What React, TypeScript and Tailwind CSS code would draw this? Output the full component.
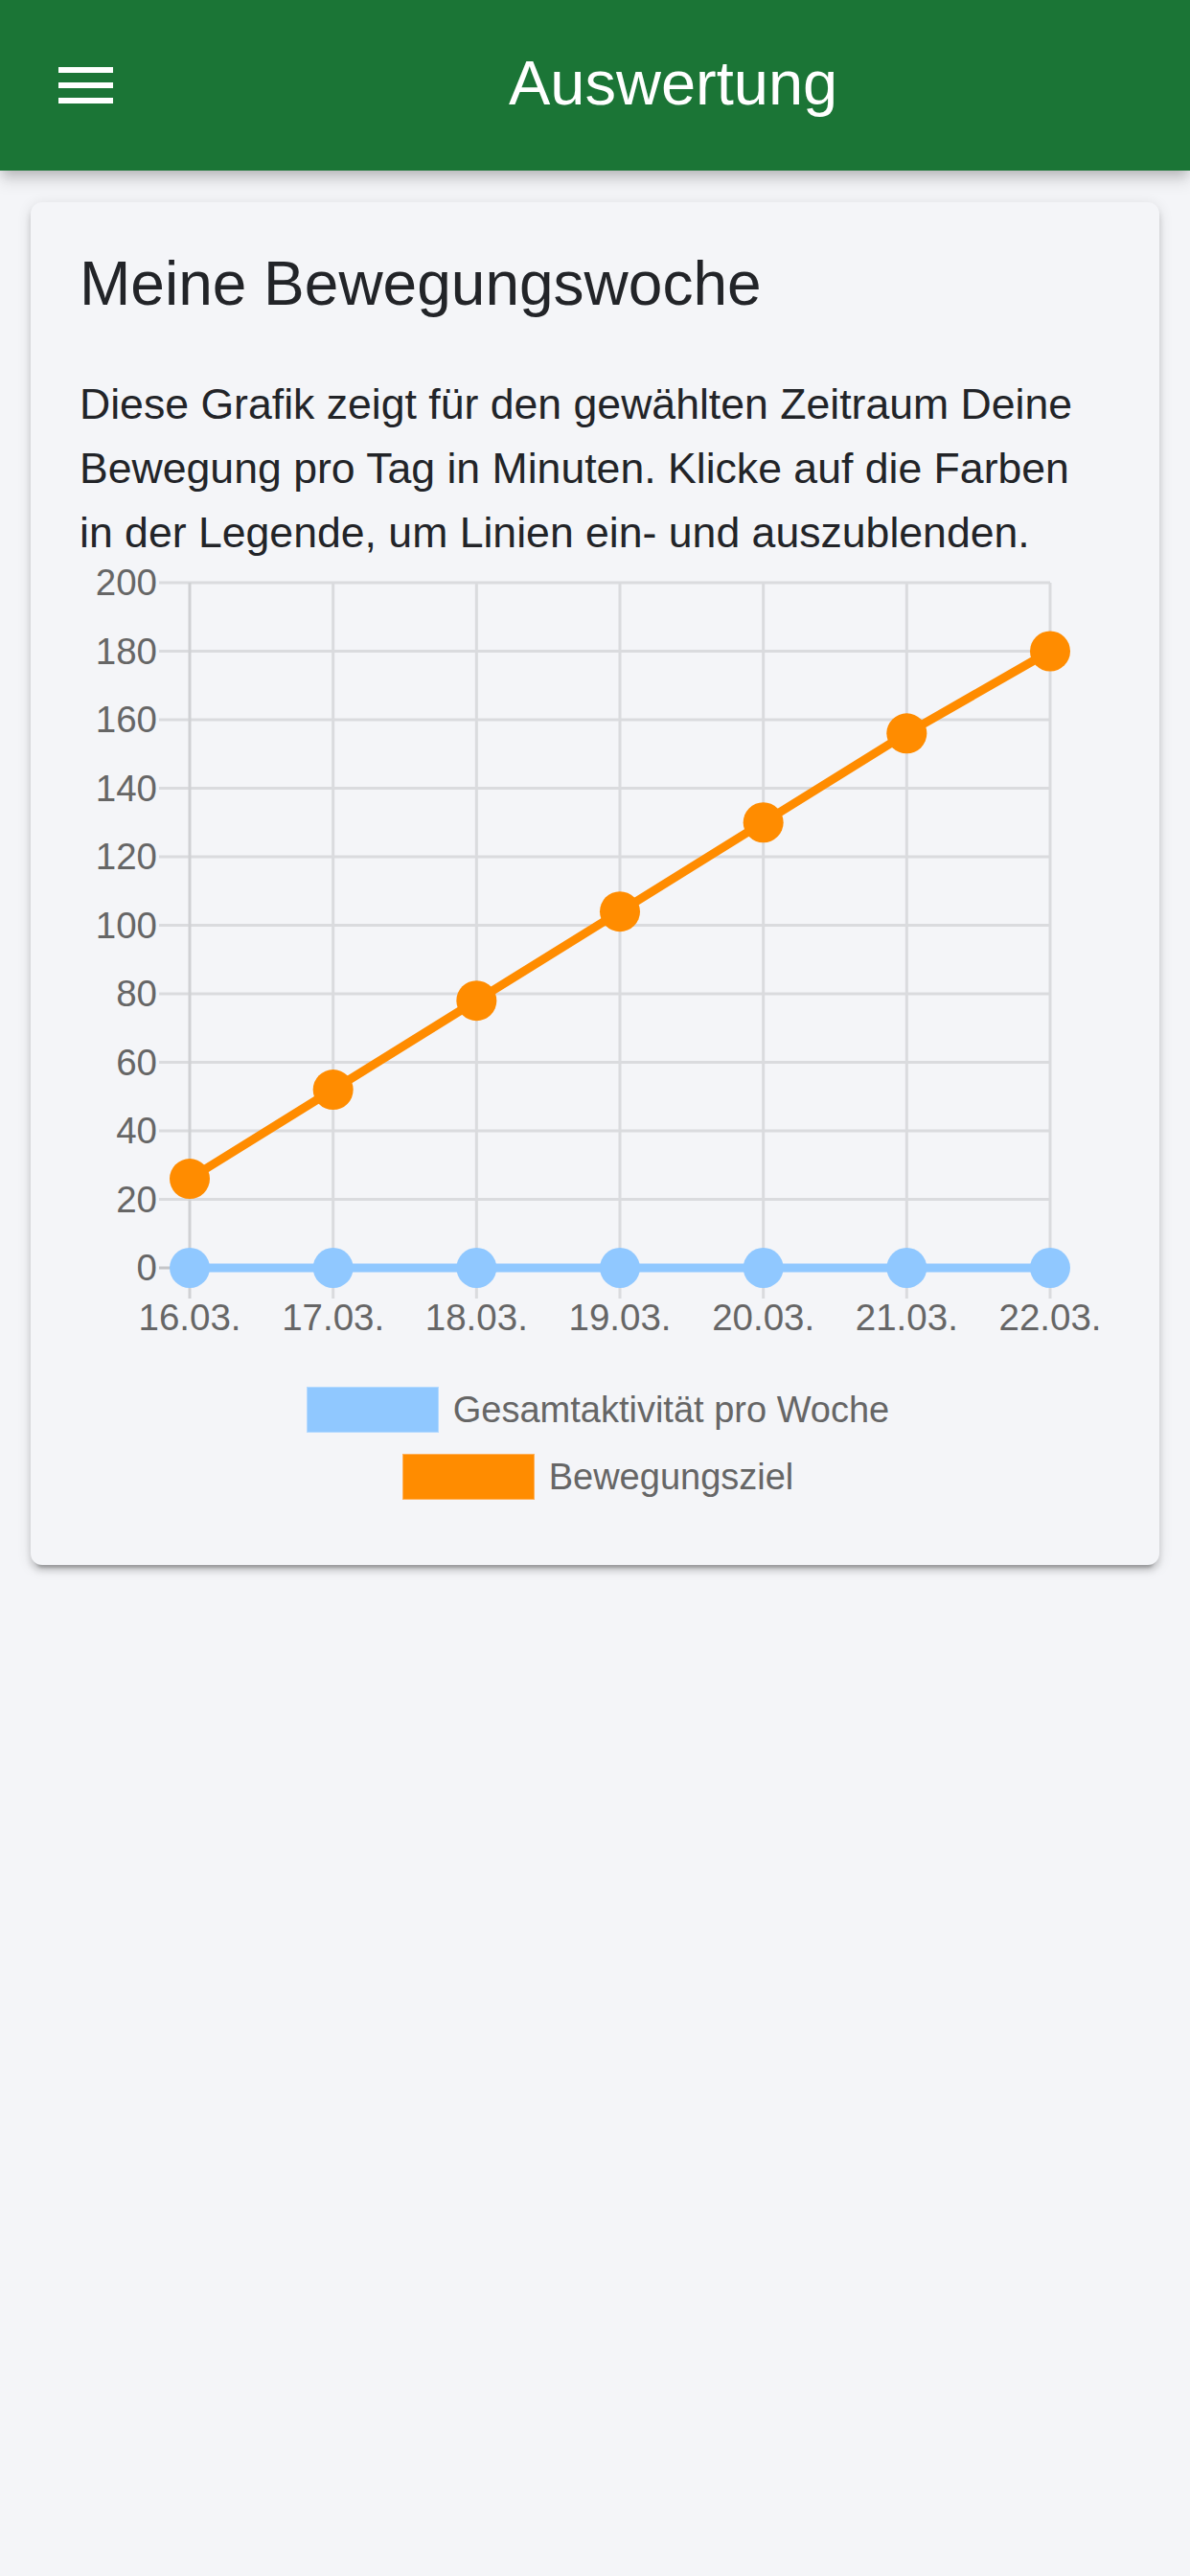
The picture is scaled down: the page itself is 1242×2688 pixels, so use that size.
import React from "react";

const days = ["16.03.", "17.03.", "18.03.", "19.03.", "20.03.", "21.03.", "22.03."];
const yTicks = [200, 180, 160, 140, 120, 100, 80, 60, 40, 20, 0];

// chart geometry (svg-local px)
const TOP = 19;
const ZERO = 734;
const UNIT = (ZERO - TOP) / 200;
const COL0 = 118;
const COL_STEP = (1016 - 118) / 6;
const LEFT = 86;
const RIGHT = 1016;

const goal = [26, 52, 78, 104, 130, 156, 180];
const activity = days.map(() => 0);

function toPoints(values: number[]) {
  return values.map((v, i) => ({ x: COL0 + i * COL_STEP, y: ZERO - v * UNIT }));
}

function MovementChart() {
  const goalPts = toPoints(goal);
  const actPts = toPoints(activity);

  return (
    <svg width={1082} height={820} className="-ml-[3px] block overflow-visible">
      {yTicks.map((t) => {
        const y = ZERO - t * UNIT;
        return (
          <g key={t}>
            <line x1={LEFT} x2={RIGHT} y1={y} y2={y} stroke={t === 0 ? "#c4c5c8" : "#dadbde"} strokeWidth={3} />
            <text
              x={84}
              y={y + 13}
              textAnchor="end"
              fontSize={38.5}
              fill="#666666"
              fontFamily="'Liberation Sans', Arial, sans-serif"
            >
              {t}
            </text>
          </g>
        );
      })}
      {days.map((d, i) => {
        const x = COL0 + i * COL_STEP;
        return (
          <g key={d}>
            <line x1={x} x2={x} y1={TOP} y2={766} stroke={i === 0 ? "#d0d1d4" : "#dadbde"} strokeWidth={3} />
            <text
              x={x}
              y={799}
              textAnchor="middle"
              fontSize={38.5}
              fill="#666666"
              fontFamily="'Liberation Sans', Arial, sans-serif"
            >
              {d}
            </text>
          </g>
        );
      })}

      <polyline
        points={actPts.map((p) => `${p.x},${p.y}`).join(" ")}
        fill="none"
        stroke="#90c8ff"
        strokeWidth={9}
      />
      {actPts.map((p, i) => (
        <circle key={i} cx={p.x} cy={p.y} r={21} fill="#90c8ff" />
      ))}

      <polyline
        points={goalPts.map((p) => `${p.x},${p.y}`).join(" ")}
        fill="none"
        stroke="#ff8c00"
        strokeWidth={9}
        strokeLinejoin="round"
      />
      {goalPts.map((p, i) => (
        <circle key={i} cx={p.x} cy={p.y} r={21} fill="#ff8c00" />
      ))}
    </svg>
  );
}

function LegendItem({ color, border, label }: { color: string; border: string; label: string }) {
  return (
    <div className="flex items-center gap-[15px]">
      <span className={`block h-[48px] w-[138px] border ${color} ${border}`} />
      <span className="text-[38px] leading-[48px] text-[#666666]">{label}</span>
    </div>
  );
}

export default function App() {
  return (
    <div className="min-h-[2688px] bg-[#f4f5f8] font-['Liberation_Sans',Arial,sans-serif]">
      <header className="relative z-10 flex h-[178px] items-center bg-[#1b7536] shadow-[0_6px_12px_-3px_rgba(0,0,0,0.2),0_12px_15px_0_rgba(0,0,0,0.1)]">
        <button className="ml-[61px] flex flex-col gap-[10px]" aria-label="Menü">
          <span className="block h-[6px] w-[57px] bg-white" />
          <span className="block h-[6px] w-[57px] bg-white" />
          <span className="block h-[6px] w-[57px] bg-white" />
        </button>
        <h1 className="mb-[5px] ml-[413px] text-[65px] leading-none text-white">Auswertung</h1>
      </header>

      <main className="px-[32px] pt-[33px]">
        <section className="rounded-[12px] bg-[#f4f5f8] pb-[68px] pl-[51px] pr-[45px] pt-[47px] shadow-[0_9px_3px_-6px_rgba(0,0,0,0.2),0_6px_6px_0_rgba(0,0,0,0.14),0_3px_15px_0_rgba(0,0,0,0.12)]">
          <h2 className="text-[64px] leading-[76px] text-[#222428]">Meine Bewegungswoche</h2>
          <p className="mt-[54px] text-[44.6px] leading-[67px] text-[#222428]">
            <span className="block whitespace-nowrap">Diese Grafik zeigt für den gewählten Zeitraum Deine</span>
            <span className="block whitespace-nowrap">Bewegung pro Tag in Minuten. Klicke auf die Farben</span>
            <span className="block whitespace-nowrap">in der Legende, um Linien ein- und auszublenden.</span>
          </p>

          <MovementChart />

          <div className="mt-[38px] flex flex-col items-center gap-[22px]">
            <LegendItem color="bg-[#90c8ff]" border="border-[#b5daff]" label="Gesamtaktivität pro Woche" />
            <LegendItem color="bg-[#ff8c00]" border="border-[#ffb15a]" label="Bewegungsziel" />
          </div>
        </section>
      </main>
    </div>
  );
}
